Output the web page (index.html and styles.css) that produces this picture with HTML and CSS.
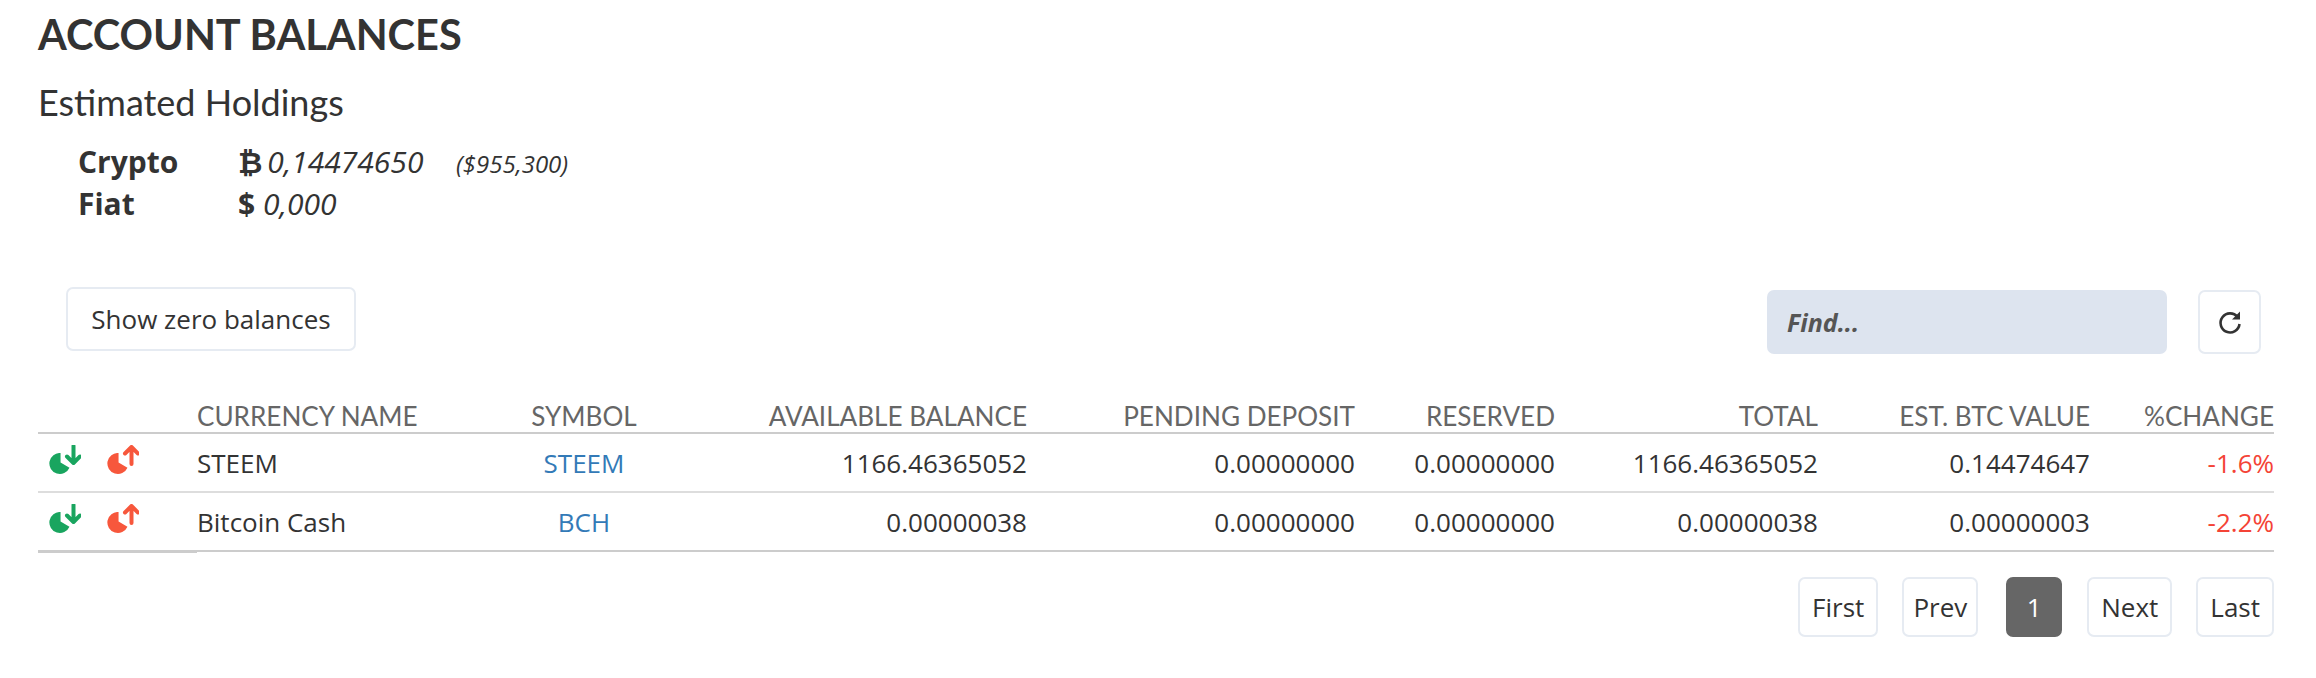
FILE: index.html
```html
<!DOCTYPE html>
<html lang="en">
<head>
    <meta charset="UTF-8">
    <title>Account Balances</title>
    <link rel="stylesheet" href="styles.css">
</head>
<body>
    <svg class="defs" width="0" height="0">
        <symbol id="pie" viewBox="0 0 20 20">
            <path d="M11 0 A10 10 0 1 0 19.5 14 L11 9 Z"/>
        </symbol>
    </svg>
    <h1>ACCOUNT BALANCES</h1>
    <h2>Estimated Holdings</h2>
    <div class="holdings">
        <div class="holding">
            <b class="holding-label">Crypto</b>
            <span class="holding-value"><b class="btc">&#8383;</b> <i>0,14474650</i></span>
            <i class="holding-usd">($955,300)</i>
        </div>
        <div class="holding">
            <b class="holding-label">Fiat</b>
            <span class="holding-value"><b>$</b> <i>0,000</i></span>
        </div>
    </div>

    <div class="toolbar">
        <button class="btn btn-zero">Show zero balances</button>
        <div class="toolbar-right">
            <input class="find" type="text" placeholder="Find...">
            <button class="btn btn-refresh">
                <svg width="24" height="26" viewBox="0 0 24 26">
                    <path d="M19.5 8 A9.5 9.5 0 1 0 21.5 15" fill="none" stroke="#333" stroke-width="2.6"/>
                    <path d="M14 10.5 L22 2.5 V10.5 Z" fill="#333"/>
                </svg>
            </button>
        </div>
    </div>

    <table>
        <colgroup>
            <col class="c-dep"><col class="c-wd"><col class="c-name"><col class="c-sym">
            <col class="c-avail"><col class="c-pend"><col class="c-res"><col class="c-total">
            <col class="c-btc"><col class="c-chg">
        </colgroup>
        <thead>
            <tr>
                <th></th><th></th>
                <th class="left">CURRENCY NAME</th>
                <th class="center">SYMBOL</th>
                <th>AVAILABLE BALANCE</th>
                <th>PENDING DEPOSIT</th>
                <th>RESERVED</th>
                <th>TOTAL</th>
                <th>EST. BTC VALUE</th>
                <th>%CHANGE</th>
            </tr>
        </thead>
        <tbody>
            <tr>
                <td class="icon-cell">
                    <svg class="coin green" width="32" height="30" viewBox="0 0 32 30">
                        <use href="#pie" x="0" y="8" width="21" height="21"/>
                        <path d="M24.5 1 V16 M18 11.5 L24.5 18 L31 11.5" class="arrow"/>
                    </svg>
                </td>
                <td class="icon-cell">
                    <svg class="coin red" width="32" height="30" viewBox="0 0 32 30">
                        <use href="#pie" x="0" y="8" width="21" height="21"/>
                        <path d="M24.5 19 V3 M18 8.5 L24.5 2 L31 8.5" class="arrow"/>
                    </svg>
                </td>
                <td class="left">STEEM</td>
                <td class="center"><a href="#">STEEM</a></td>
                <td>1166.46365052</td>
                <td>0.00000000</td>
                <td>0.00000000</td>
                <td>1166.46365052</td>
                <td>0.14474647</td>
                <td class="neg">-1.6%</td>
            </tr>
            <tr>
                <td class="icon-cell">
                    <svg class="coin green" width="32" height="30" viewBox="0 0 32 30">
                        <use href="#pie" x="0" y="8" width="21" height="21"/>
                        <path d="M24.5 1 V16 M18 11.5 L24.5 18 L31 11.5" class="arrow"/>
                    </svg>
                </td>
                <td class="icon-cell">
                    <svg class="coin red" width="32" height="30" viewBox="0 0 32 30">
                        <use href="#pie" x="0" y="8" width="21" height="21"/>
                        <path d="M24.5 19 V3 M18 8.5 L24.5 2 L31 8.5" class="arrow"/>
                    </svg>
                </td>
                <td class="left">Bitcoin Cash</td>
                <td class="center"><a href="#">BCH</a></td>
                <td>0.00000038</td>
                <td>0.00000000</td>
                <td>0.00000000</td>
                <td>0.00000038</td>
                <td>0.00000003</td>
                <td class="neg">-2.2%</td>
            </tr>
        </tbody>
    </table>

    <div class="pager">
        <button class="btn page">First</button>
        <button class="btn page page-prev">Prev</button>
        <button class="btn page current">1</button>
        <button class="btn page">Next</button>
        <button class="btn page">Last</button>
    </div>
</body>
</html>
```

FILE: styles.css
```css
body {
    font-family: "Open Sans", Arial, sans-serif;
    margin: 0;
    padding: 0 42px 0 38px;
    background-color: #fff;
    color: #333;
    font-size: 26px;
}
.defs {
    position: absolute;
}
h1 {
    font-family: Lato, Arial, sans-serif;
    font-size: 41.5px;
    line-height: 42px;
    font-weight: 700;
    margin: 13px 0 0;
}
h2 {
    font-family: Lato, Arial, sans-serif;
    font-size: 36px;
    line-height: 40px;
    font-weight: 400;
    margin: 27px 0 0;
}
.holdings {
    margin: 19px 0 0 40px;
}
.holding {
    display: flex;
    align-items: baseline;
    height: 42px;
    line-height: 42px;
    font-size: 30px;
}
.holding-label {
    width: 160px;
}
.holding-value {
    width: 218px;
}
.btc {
    margin-right: -3px;
}
.holding-usd {
    font-size: 24px;
}

/* toolbar */
.toolbar {
    display: flex;
    justify-content: space-between;
    align-items: flex-start;
    margin: 62px 13px 0 28px;
}
.toolbar-right {
    display: flex;
    gap: 31px;
    margin-top: 3px;
}
.btn {
    font-family: "Open Sans", Arial, sans-serif;
    font-size: 26px;
    color: #333;
    background-color: #fff;
    border: 2px solid #e6ebf2;
    border-radius: 7px;
    padding: 0;
}
.btn-zero {
    width: 290px;
    height: 64px;
}
.btn-refresh {
    width: 63px;
    height: 64px;
    display: flex;
    align-items: center;
    justify-content: center;
}
.find {
    width: 400px;
    height: 64px;
    box-sizing: border-box;
    border: none;
    border-radius: 7px;
    background-color: #dde4ef;
    padding: 0 20px;
    font-family: "Open Sans", Arial, sans-serif;
    font-size: 25px;
    font-style: italic;
    font-weight: 700;
}
.find::placeholder {
    color: #555;
    opacity: 1;
}
.btn-refresh, .find {
    box-sizing: border-box;
}

/* table */
table {
    width: 2236px;
    table-layout: fixed;
    border-collapse: collapse;
    margin-top: 38px;
}
.c-dep { width: 58px; }
.c-wd { width: 101px; }
.c-name { width: 285px; }
.c-sym { width: 204px; }
.c-avail { width: 341px; }
.c-pend { width: 328px; }
.c-res { width: 200px; }
.c-total { width: 263px; }
.c-btc { width: 272px; }
.c-chg { width: 184px; }
th {
    font-family: Lato, Arial, sans-serif;
    font-size: 26.1px;
    font-weight: 400;
    color: #666;
    text-align: right;
    height: 40px;
    padding: 0;
    border-bottom: 2px solid #ccc;
    vertical-align: bottom;
}
td {
    text-align: right;
    height: 57px;
    padding: 0;
    border-bottom: 2px solid #ddd;
}
tbody tr:last-child td {
    border-bottom-color: #ccc;
}
tbody tr:last-child .icon-cell {
    box-shadow: 0 2px 0 #ccc;
}
th.left, td.left {
    text-align: left;
}
th.center, td.center {
    text-align: center;
}
td a {
    color: #337ab7;
    text-decoration: none;
}
.neg {
    color: #f44336;
}
.icon-cell {
    text-align: left;
    padding-left: 11px;
    padding-bottom: 5px;
    height: 52px;
    line-height: 0;
}
.coin.green { fill: #19a55f; stroke: #19a55f; }
.coin.red { fill: #f7573c; stroke: #f7573c; }
.coin use {
    stroke: none;
}
.arrow {
    fill: none;
    stroke-width: 4;
    stroke-linecap: round;
    stroke-linejoin: round;
}

/* pagination */
.pager {
    display: flex;
    justify-content: flex-end;
    gap: 24px;
    margin-top: 25px;
}
.page {
    height: 60px;
    padding: 0 12px;
}
.page-prev {
    padding: 0 9px;
    margin-right: 1px;
}
.page.current {
    width: 56px;
    margin: 0 1px 0 3px;
    background-color: #666;
    border-color: #666;
    color: #fff;
}
```
